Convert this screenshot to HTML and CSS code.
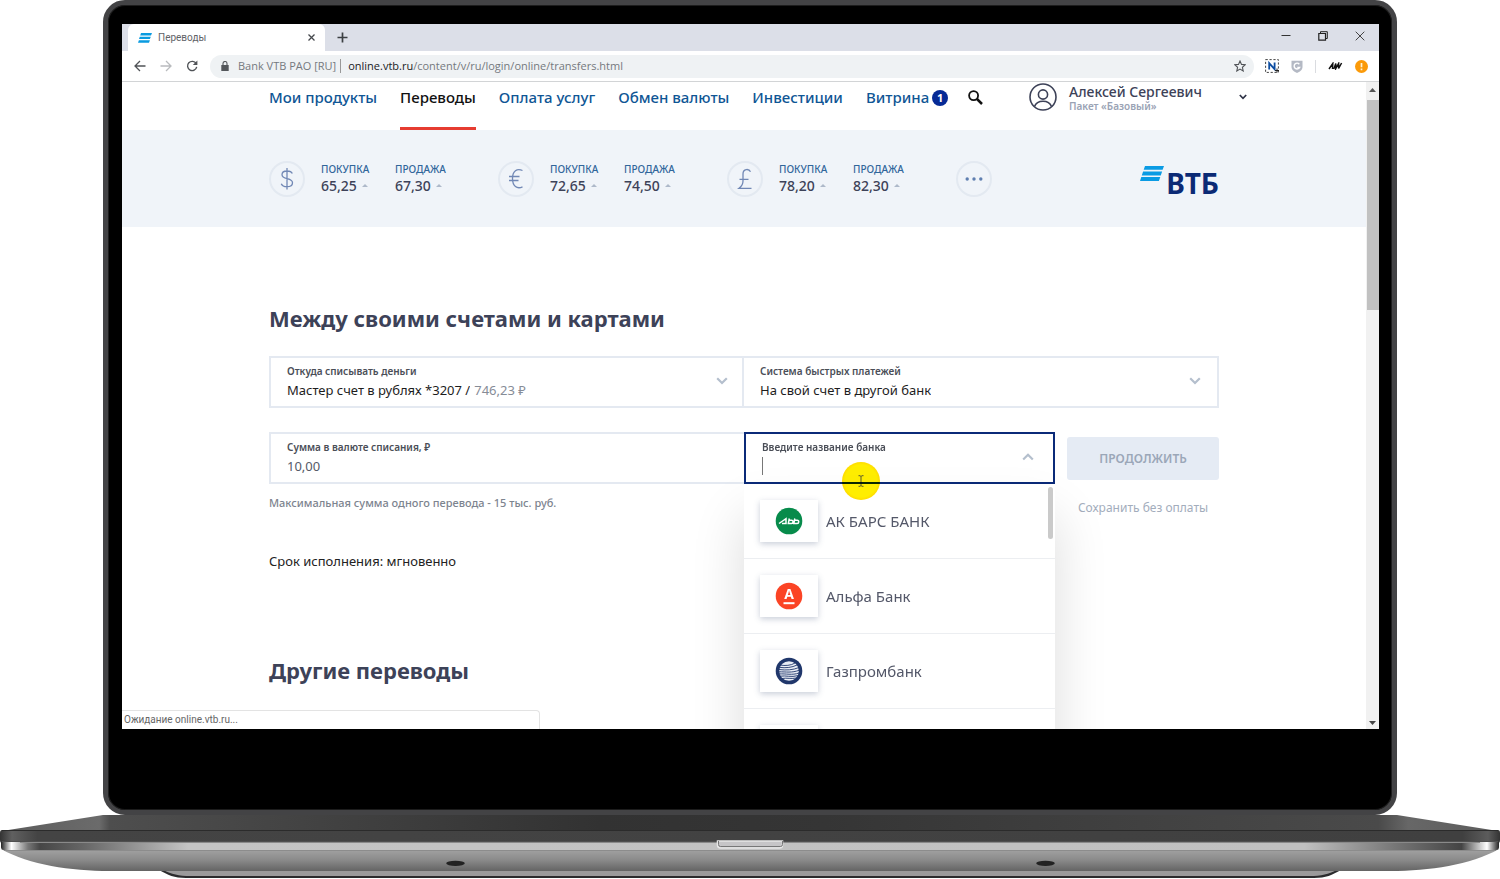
FILE: index.html
```html
<!DOCTYPE html>
<html lang="ru">
<head>
<meta charset="utf-8">
<meta name="viewport" content="width=device-width, initial-scale=1">
<title>Переводы</title>
<link rel="stylesheet" href="styles.css">
</head>
<body>
<div class="laptop">
  <div class="lid">
    <div class="screen">
      <div class="tabbar">
        <div class="tab">
          <svg class="tab-logo" viewBox="0 0 14 10" aria-hidden="true"><path d="M3 0h11l-1 2.400H2.200zM1.800 3.700h11l-.9 2.400H1zM.9 7.300h11L11 9.800H0z" fill="#0a9be0"/></svg>
          <span class="tab-title">Переводы</span>
          <button class="plain" aria-label="Закрыть вкладку"><svg width="7" height="7" viewBox="0 0 7 7"><path d="M.5.5l6 6M6.500.5l-6 6" stroke="#45484d" stroke-width="1.300"/></svg></button>
        </div>
        <button class="plain new-tab" aria-label="Новая вкладка"><svg width="11" height="11" viewBox="0 0 11 11"><path d="M5.500.5v10M.5 5.500h10" stroke="#3c4043" stroke-width="1.700"/></svg></button>
        <div class="window-buttons">
          <button class="plain" aria-label="Свернуть"><svg width="10" height="10" viewBox="0 0 10 10"><path d="M.5 4.500h9" stroke="#333"/></svg></button>
          <button class="plain" aria-label="Окно"><svg width="10" height="10" viewBox="0 0 10 10" fill="none" stroke="#222"><path d="M.8 2.500h6.700v6.700H.8z" stroke-width="1.200"/><path d="M2.500 2.500V.7h6.800v6.800H7.500"/></svg></button>
          <button class="plain" aria-label="Закрыть"><svg width="10" height="10" viewBox="0 0 10 10"><path d="M.7.7l8.600 8.600M9.300.7L.7 9.300" stroke="#444"/></svg></button>
        </div>
      </div>
      <div class="toolbar">
        <button class="plain" aria-label="Назад"><svg width="12" height="12" viewBox="0 0 12 12" fill="none" stroke="#505357" stroke-width="1.300"><path d="M11.500 6H1M6 1L1 6l5 5"/></svg></button>
        <button class="plain" aria-label="Вперёд"><svg width="12" height="12" viewBox="0 0 12 12" fill="none" stroke="#b9bbbe" stroke-width="1.300"><path d="M.5 6H11M6 1l5 5-5 5"/></svg></button>
        <button class="plain" aria-label="Обновить"><svg width="12" height="12" viewBox="0 0 13 13" fill="none" stroke="#505357" stroke-width="1.500"><path d="M11 3.900A5 5 0 1 0 11.600 7.500"/><path d="M12.300.6v4.900H7.400z" fill="#505357" stroke="none"/></svg></button>
        <div class="omnibox">
          <svg width="8" height="10" viewBox="0 0 8 10"><path d="M.3 4h7.400v6H.3z" fill="#54575b"/><path d="M2 4V2.500a2 2 0 0 1 4 0V4" fill="none" stroke="#54575b" stroke-width="1.100"/></svg>
          <span class="cert">Bank VTB PAO [RU]</span>
          <span class="url"><b>online.vtb.ru</b>/content/v/ru/login/online/transfers.html</span>
          <button class="plain" aria-label="В закладки"><svg width="12" height="12" viewBox="0 0 12 12"><path d="M6 1l1.500 3.400 3.700.4-2.800 2.500.8 3.700L6 9.100 2.800 11l.8-3.700L.8 4.800l3.700-.4z" fill="none" stroke="#505357" stroke-width="1.100"/></svg></button>
        </div>
        <div class="extensions">
          <svg width="14" height="14" viewBox="0 0 14 14"><path d="M.6.6h12.800v12.800H.6z" fill="none" stroke="#444" stroke-width="1" stroke-dasharray="2.200 1.700"/><path d="M4.200 10.500V4.200l5.400 6V3.500" fill="none" stroke="#0d4da1" stroke-width="1.800"/><path d="M12 9.500v4M10 11.500h4" stroke="#222"/></svg>
          <svg width="12" height="13" viewBox="0 0 12 13"><path d="M.5.7h11V7c0 3-3 5-5.500 6C3.500 12 .5 10 .5 7z" fill="#b4b9c4"/><path d="M8.300 4.200a2.900 2.900 0 1 0 .3 3.300H6.300" fill="none" stroke="#fff" stroke-width="1.400"/></svg>
          <span class="separator"></span>
          <svg width="15" height="8" viewBox="0 0 15 8"><path d="M1 7L4.800 1.500 4.500 7M5.800 7L7.800 1.500 7.800 6.500 10.600 1.500V6.500L13.600 1" fill="none" stroke="#111" stroke-width="1.500"/></svg>
          <svg width="13" height="13" viewBox="0 0 13 13"><circle cx="6.500" cy="6.500" r="6.500" fill="#fb9a09"/><path d="M6.500 3v4.300M6.500 8.600v1.600" stroke="#fff3d6" stroke-width="1.700"/></svg>
        </div>
      </div>

      <div class="viewport">
        <div class="page">
          <header class="header wrap">
            <nav class="nav">
              <a href="#">Мои продукты</a>
              <a href="#" class="current" aria-current="page">Переводы</a>
              <a href="#">Оплата услуг</a>
              <a href="#">Обмен валюты</a>
              <a href="#">Инвестиции</a>
              <a href="#" class="showcase">Витрина<span class="count">1</span></a>
            </nav>
            <button class="plain search" aria-label="Поиск"><svg width="15" height="15" viewBox="0 0 15 15" fill="none" stroke="#111"><circle cx="5.600" cy="5.600" r="4.500" stroke-width="1.800"/><path d="M9 9l5 5" stroke-width="2.500"/></svg></button>
            <button class="plain user">
              <svg width="28" height="28" viewBox="0 0 28 28" fill="none" stroke="#3d4258" stroke-width="1.600"><circle cx="14" cy="14" r="13"/><circle cx="14" cy="11.500" r="4.600"/><path d="M5.500 23.500c1.500-4 4.500-5.200 8.500-5.200s7 1.200 8.500 5.200"/></svg>
              <span class="user-text"><span class="user-name">Алексей Сергеевич</span><span class="user-plan">Пакет «Базовый»</span></span>
              <svg width="8" height="6" viewBox="0 0 8 6"><path d="M.8 1L4 4.300 7.200 1" fill="none" stroke="#2f3447" stroke-width="1.700"/></svg>
            </button>
          </header>

          <section class="rates" aria-label="Курсы валют">
            <div class="rates-row wrap">
              <div class="rate">
                <span class="coin"><svg width="16" height="24" viewBox="0 0 16 24"><path d="M13.300 6.500C12.500 4.600 10.500 4 8 4 5 4 3 5.300 3 7.700c0 5.300 10.500 2.700 10.500 8 0 2.500-2.200 4-5.500 4-3 0-5-1-5.700-3M8 1v21.500"/></svg></span>
                <dl><dt>Покупка</dt><dd>65,25</dd></dl>
                <dl><dt>Продажа</dt><dd>67,30</dd></dl>
              </div>
              <div class="rate">
                <span class="coin"><svg width="16" height="24" viewBox="0 0 16 24"><path d="M14.500 3.500C9 1 4.500 4 4.500 11.500s4.500 11 10 8.300M1 9.500h10.500M1 13.500h9.500"/></svg></span>
                <dl><dt>Покупка</dt><dd>72,65</dd></dl>
                <dl><dt>Продажа</dt><dd>74,50</dd></dl>
              </div>
              <div class="rate">
                <span class="coin"><svg width="16" height="24" viewBox="0 0 16 24"><path d="M13.500 4.800C12 1.500 6 1.500 6 7v7c0 3-1.500 5.500-4 7.300h12.500M2.500 12.300h9"/></svg></span>
                <dl><dt>Покупка</dt><dd>78,20</dd></dl>
                <dl><dt>Продажа</dt><dd>82,30</dd></dl>
              </div>
              <button class="plain coin" aria-label="Другие курсы"><svg width="18" height="4" viewBox="0 0 18 4"><g fill="#5f7fb0" stroke="none"><circle cx="2.200" cy="2" r="1.700"/><circle cx="9" cy="2" r="1.700"/><circle cx="15.800" cy="2" r="1.700"/></g></svg></button>
              <a href="#" class="brand"><svg width="24" height="16" viewBox="0 0 24 16" aria-hidden="true"><path d="M5 0h19l-1.400 3.800H3.700zM3.100 5.500h19l-1.300 3.900H1.800zM1.300 11h19l-1.400 3.900H0z" fill="#0a9be4"/></svg><span>ВТБ</span></a>
            </div>
          </section>

          <main class="wrap main">
            <h2>Между своими счетами и картами</h2>
            <form class="transfer">
              <div class="accounts">
                <div class="field">
                  <div class="field-body">
                    <label for="from">Откуда списывать деньги</label>
                    <div class="value"><select id="from"><option>Мастер счет в рублях *3207 /</option></select><span class="balance">746,23 ₽</span></div>
                  </div>
                  <svg class="chevron" viewBox="0 0 12 8"><path d="M1.200 1.200L6 6l4.800-4.800"/></svg>
                </div>
                <div class="field">
                  <div class="field-body">
                    <label for="to">Система быстрых платежей</label>
                    <div class="value"><select id="to"><option>На свой счет в другой банк</option></select></div>
                  </div>
                  <svg class="chevron" viewBox="0 0 12 8"><path d="M1.200 1.200L6 6l4.800-4.800"/></svg>
                </div>
              </div>
              <div class="payment">
                <div class="field amount">
                  <div class="field-body">
                    <label for="amount">Сумма в валюте списания, ₽</label>
                    <input id="amount" type="text" value="10,00">
                  </div>
                </div>
                <div class="field bank">
                  <div class="field-body">
                    <label for="bank">Введите название банка</label>
                    <div class="value"><span class="caret"></span><input id="bank" type="text" role="combobox" aria-expanded="true" aria-controls="banks"></div>
                  </div>
                  <svg class="chevron" viewBox="0 0 12 8"><path d="M1.200 6.500L6 1.700l4.800 4.800"/></svg>
                  <div class="bank-list">
                    <ul id="banks" role="listbox">
                      <li role="option"><span class="card"><svg width="28" height="28" viewBox="0 0 28 28"><circle cx="14" cy="14" r="13.300" fill="#078b4b"/><path d="M4 16.500l7-4.800v4.800H7M14.300 11.500l-1 5h3.200c1.800 0 2.200-3.200 0-3.200h-2.300M19.800 11.500l-1 5h3.400c1.900 0 2.200-3.200 0-3.200h-2.600" fill="none" stroke="#fff" stroke-width="1.500"/></svg></span>АК БАРС БАНК</li>
                      <li role="option"><span class="card"><svg width="28" height="28" viewBox="0 0 28 28"><circle cx="14" cy="14" r="13.300" fill="#fb4425"/><text x="14" y="17" class="alfa">А</text><path d="M8.500 20.200h11v2h-11z" fill="#fff"/></svg></span>Альфа Банк</li>
                      <li role="option"><span class="card"><svg width="28" height="28" viewBox="0 0 28 28"><circle cx="14" cy="14" r="13.300" fill="#20376b"/><circle cx="14" cy="14" r="9.800" fill="#e9edf5"/><path d="M5 8c5 1 11 .6 15-2M4 10.300c7 1 13 .2 18-2.300M4 12.500c7 1 14 .5 20-2M4 14.800c7 0 13 1.200 20-1.500M4 17c7-.6 13 1.500 20-1M5 19.200c6-1 11 1.400 18-.6M7 21.500c5-1 9 .8 15-.6" fill="none" stroke="#20376b" stroke-width=".9"/></svg></span>Газпромбанк</li>
                      <li role="option" aria-label="Ещё банк"><span class="card"></span></li>
                    </ul>
                    <span class="list-thumb"></span>
                  </div>
                  <span class="pointer"><svg width="6" height="12" viewBox="0 0 6 12"><path d="M.5.7h1.500l1 .8 1-.8h1.500M3 1.500v9M.5 11.300h1.500l1-.8 1 .8h1.500M1.800 7.500h2.400" fill="none" stroke="#5b5a30"/></svg></span>
                </div>
                <div class="actions">
                  <button type="button" class="continue" disabled>ПРОДОЛЖИТЬ</button>
                  <a href="#" class="save">Сохранить без оплаты</a>
                </div>
              </div>
              <p class="hint">Максимальная сумма одного перевода - 15 тыс. руб.</p>
            </form>
            <p class="term">Срок исполнения: мгновенно</p>
            <h2>Другие переводы</h2>
          </main>
        </div>
        <div class="scrollbar" aria-hidden="true">
          <svg width="7" height="4" viewBox="0 0 7 4"><path d="M0 4l3.500-4L7 4z" fill="#555"/></svg>
          <span class="thumb"></span>
          <svg width="7" height="4" viewBox="0 0 7 4"><path d="M0 0l3.500 4L7 0z" fill="#444"/></svg>
        </div>
        <div class="status">Ожидание online.vtb.ru...</div>
      </div>
    </div>
  </div>
  <svg class="base" viewBox="0 0 1500 64" preserveAspectRatio="none" aria-hidden="true">
    <defs>
      <linearGradient id="deck"><stop offset="0" stop-color="#5c5c5c"/><stop offset=".065" stop-color="#6b6b6b"/><stop offset=".072" stop-color="#4e4e4e"/><stop offset=".4" stop-color="#323232"/><stop offset=".55" stop-color="#353535"/><stop offset=".92" stop-color="#4a4a4a"/><stop offset=".94" stop-color="#676767"/><stop offset="1" stop-color="#5c5c5c"/></linearGradient>
      <linearGradient id="side"><stop offset="0" stop-color="#333"/><stop offset=".008" stop-color="#606060"/><stop offset=".025" stop-color="#444"/><stop offset=".975" stop-color="#404040"/><stop offset=".992" stop-color="#5c5c5c"/><stop offset="1" stop-color="#333"/></linearGradient>
      <linearGradient id="strip"><stop offset="0" stop-color="#222"/><stop offset=".007" stop-color="#fff"/><stop offset=".018" stop-color="#777"/><stop offset=".026" stop-color="#464646"/><stop offset=".055" stop-color="#666"/><stop offset=".125" stop-color="#c4c4c4"/><stop offset=".87" stop-color="#c0c0c0"/><stop offset=".93" stop-color="#777"/><stop offset=".975" stop-color="#444"/><stop offset=".992" stop-color="#fff"/><stop offset="1" stop-color="#222"/></linearGradient>
      <linearGradient id="belly" x2="0" y2="1"><stop offset="0" stop-color="#a3a3a3"/><stop offset=".5" stop-color="#8a8a8a"/><stop offset="1" stop-color="#646464"/></linearGradient>
    </defs>
    <path d="M159 55C168 60 174 63 186 63H1314c12 0 18-3 27-8z" fill="#2b2b2d"/>
    <path d="M163 55c9 4 15 6 28 6H1309c13 0 19-2 28-6z" fill="#9b9a9b"/>
    <path d="M1 34C30 50 70 56 110 56H1390c40 0 80-6 109-22z" fill="url(#belly)"/>
    <path d="M103 0H1397L1498 16H2z" fill="url(#deck)"/>
    <path d="M2 15H1498q2 0 2 3v7q0 3-2 3H2q-2 0-2-3v-7q0-3 2-3z" fill="url(#side)"/>
    <path d="M2 15.500H1498" stroke="#2b2b2b"/>
    <path d="M1 27H1499v5q0 3-3 3H4q-3 0-3-3z" fill="url(#strip)"/>
    <path d="M2 26.500H1498" stroke="#4f4f4f"/><path d="M20 27.500H1480" stroke="#8a8a8a"/>
    <path d="M4 35.500H1496" stroke="#8c8c8c"/>
    <path d="M717.500 26v4q0 3 3 3h59q3 0 3-3v-4z" fill="#c6c5c7" stroke="#e6e6e6" stroke-width="1.500"/>
    <path d="M718.500 26v3.500q0 2 2 2h60q2 0 2-2V26" fill="none" stroke="#777"/>
    <ellipse cx="455.500" cy="48.300" rx="9.300" ry="2.600" fill="#222"/><ellipse cx="1045.500" cy="48.300" rx="9.300" ry="2.600" fill="#222"/>
  </svg>
</div>
</body>
</html>
```
FILE: styles.css
```css
* { box-sizing: border-box; }

body {
  margin: 0;
  background: #fff;
  color: #222;
  font-family: "Noto Sans", "Open Sans", sans-serif;
  font-size: 13px;
}

h2, p, dl, dd, ul { margin: 0; padding: 0; }
a { color: inherit; text-decoration: none; }
svg { display: block; flex: none; }
button, input, select { font: inherit; color: inherit; }
.plain { padding: 0; border: 0; background: none; display: flex; align-items: center; }

/* Laptop */
.laptop { display: flex; flex-direction: column; height: 100vh; min-height: 600px; }
.lid {
  flex: 1;
  min-height: 0;
  display: flex;
  margin: 0 103px;
  padding: 19px 13px 81px 14px;
  border: 5px solid #434345;
  border-radius: 22px;
  background: #000;
  box-shadow: inset 0 0 0 1px #1d1d1d;
}
.base { width: 100%; height: 64px; }
.screen { flex: 1; min-width: 0; display: flex; flex-direction: column; background: #fff; }

/* Browser */
.tabbar { display: flex; align-items: stretch; height: 27px; padding-left: 6px; background: #dcdfe8; }
.tab {
  display: flex;
  align-items: center;
  gap: 6px;
  width: 197px;
  padding: 0 10px;
  border-radius: 6px 6px 0 0;
  background: #fff;
}
.tab-logo { width: 14px; height: 10px; }
.tab-title { flex: 1; color: #5f6368; font-family: Roboto, sans-serif; font-size: 10px; }
.new-tab { margin-left: 12px; }
.window-buttons { display: flex; gap: 27px; margin-left: auto; padding: 0 14px 4px 0; }
.toolbar {
  display: flex;
  align-items: center;
  gap: 14px;
  height: 31px;
  padding: 0 11px 0 12px;
  border-bottom: 1px solid #d2d4d6;
}
.omnibox {
  flex: 1;
  display: flex;
  align-items: center;
  height: 23px;
  margin: 0 -3px 0 -2px;
  padding: 0 8px 0 11px;
  border-radius: 12px;
  background: #eff2f4;
  color: #75797e;
  font-family: "Open Sans", sans-serif;
  font-size: 11px;
  line-height: 14px;
  white-space: nowrap;
}
.cert { margin-left: 9px; padding-right: 4px; border-right: 1px solid #999; }
.url { flex: 1; margin-left: 7px; }
.url b { color: #202124; font-weight: 400; }
.extensions { display: flex; align-items: center; gap: 12px; }
.separator { width: 1px; height: 13px; background: #dadce0; }

.viewport { position: relative; flex: 1; min-height: 0; display: flex; overflow: hidden; }
.page { flex: 1; min-width: 0; }
.wrap { width: 100%; max-width: 950px; margin: 0 auto; }

.scrollbar { display: flex; flex-direction: column; align-items: center; width: 13px; padding: 6px 0 4px; background: #f1f1f1; }
.thumb { width: 12px; height: 33%; margin: 8px 0 auto; background: #c1c1c1; }
.status {
  position: absolute;
  left: 0;
  bottom: 0;
  width: 418px;
  padding-left: 2px;
  border: 1px solid #e3e3e3;
  border-width: 1px 1px 0 0;
  border-radius: 0 4px 0 0;
  background: #fff;
  color: #666;
  font-family: Roboto, sans-serif;
  font-size: 10px;
  line-height: 18px;
}

/* Header */
.header { display: flex; height: 48px; }
.nav { display: flex; gap: 23px; color: #0f5695; font-size: 15px; font-weight: 500; line-height: 30px; white-space: nowrap; }
.nav a { height: 48px; }
.nav .current { border-bottom: 3px solid #e63c31; color: #111; }
.showcase { display: flex; gap: 3px; }
.count {
  width: 16px;
  height: 16px;
  margin-top: 8px;
  border-radius: 50%;
  background: #062a96;
  color: #fff;
  font-size: 11px;
  font-weight: 700;
  line-height: 16px;
  text-align: center;
}
.search { height: 30px; margin-left: 20px; }
.user { height: 30px; margin: 0 -28px 0 auto; text-align: left; }
.user-text { display: flex; flex-direction: column; width: 170px; height: 30px; margin-left: 12px; }
.user-name { color: #3d4258; font-size: 14px; font-weight: 500; line-height: 19px; }
.user-plan { color: #9aa3b5; font-size: 10px; font-weight: 600; line-height: 11px; }

/* Rates */
.rates { background: #f0f4f9; }
.rates-row { display: flex; align-items: center; height: 97px; }
.rate { display: flex; width: 229px; }
.coin {
  display: flex;
  align-items: center;
  justify-content: center;
  width: 36px;
  height: 36px;
  border: 2px solid #e3e9f1;
  border-radius: 50%;
}
.coin svg { fill: none; stroke: #7188b5; stroke-width: 1.3; }
.rate dl { width: 74px; }
.rate .coin { margin-right: 16px; }
.rate dt { color: #30669b; font-size: 10px; font-weight: 500; line-height: 16px; text-transform: uppercase; }
.rate dd { display: flex; align-items: center; gap: 5px; color: #3d4258; font-size: 14px; font-weight: 500; line-height: 18px; }
.rate dd::after { content: ""; border: 3px solid transparent; border-top: 0; border-bottom-color: #aeb9ca; }
.brand { display: flex; gap: 2px; margin-left: auto; padding-top: 9px; color: #0b2a75; font-size: 28px; font-weight: 700; line-height: 34px; }

/* Transfer form */
.main { padding-top: 75px; }
h2 { color: #3d4258; font-family: "Noto Sans", sans-serif; font-size: 22px; font-weight: 700; line-height: 32px; white-space: nowrap; }
.transfer { margin-top: 22px; }
.accounts { display: grid; grid-template-columns: 1fr 1fr; }
.field {
  position: relative;
  display: flex;
  align-items: center;
  min-width: 0;
  height: 52px;
  padding: 0 16px 2px;
  border: 2px solid #e4e9f1;
}
.accounts .field:first-child, .amount { border-right-width: 0; }
.accounts .field:last-child { margin-left: -2px; }
.field-body { flex: 1; min-width: 0; display: flex; flex-direction: column; }
.field label { color: #4a4e57; font-size: 10px; font-weight: 600; line-height: 18px; }
.value { display: flex; align-items: center; gap: 4px; height: 20px; }
.field select, .field input {
  appearance: none;
  min-width: 0;
  height: 20px;
  padding: 0;
  border: 0;
  outline: 0;
  background: none;
  line-height: 20px;
}
.field select { field-sizing: content; color: #1d1d1d; }
.field input { width: 100%; color: #555a68; }
.balance { color: #868c97; }
.chevron { width: 12px; height: 8px; fill: none; stroke: #b4bfcd; stroke-width: 2.2; }
.payment { display: grid; grid-template-columns: minmax(0, 1fr) 311px 164px; margin-top: 24px; }
.bank { z-index: 2; padding-right: 19px; border-color: #0b2a78; background: #fff; }
.caret { width: 1px; height: 18px; background: #777; }

.bank-list {
  position: absolute;
  top: 50px;
  left: -2px;
  right: -2px;
  height: 300px;
  overflow: hidden;
  background: #fff;
}
.bank::before {
  content: "";
  position: absolute;
  top: 70px;
  left: -2px;
  right: -2px;
  height: 300px;
  z-index: -1;
  box-shadow: 0 12px 50px rgba(0, 0, 0, .14);
}
.bank-list li {
  display: flex;
  align-items: center;
  gap: 8px;
  height: 75px;
  padding: 0 16px;
  border-bottom: 1px solid #eceef1;
  color: #545869;
  font-size: 15px;
  list-style: none;
}
.card {
  display: flex;
  align-items: center;
  justify-content: center;
  width: 58px;
  height: 42px;
  background: #fff;
  box-shadow: 0 2px 6px rgba(60, 80, 120, .28);
}
.alfa { fill: #fff; font-family: "Open Sans", sans-serif; font-size: 14px; font-weight: 700; text-anchor: middle; }
.list-thumb { position: absolute; top: 3px; right: 2px; width: 5px; height: 52px; border-radius: 3px; background: #cacaca; }
.pointer {
  position: absolute;
  left: 96px;
  bottom: -18px;
  display: flex;
  align-items: center;
  justify-content: center;
  width: 38px;
  height: 38px;
  border-radius: 50%;
  background: radial-gradient(circle, #ffee00 60%, #ffdf00 68%);
  mix-blend-mode: multiply;
}
.actions { display: flex; flex-direction: column; margin: 5px 0 0 12px; height: 43px; text-align: center; }
.continue {
  flex: none;
  height: 43px;
  border: 0;
  border-radius: 3px;
  background: #e5ebf4;
  color: #9ba7b8;
  font-size: 12px;
  font-weight: 600;
}
.save { margin-top: 18px; color: #a3adbc; font-size: 12px; line-height: 20px; }
.hint { margin-top: 11px; color: #7d848f; font-size: 11px; font-weight: 500; line-height: 16px; }
.term { margin: 40px 0 83px; font-size: 13px; line-height: 20px; }
```
